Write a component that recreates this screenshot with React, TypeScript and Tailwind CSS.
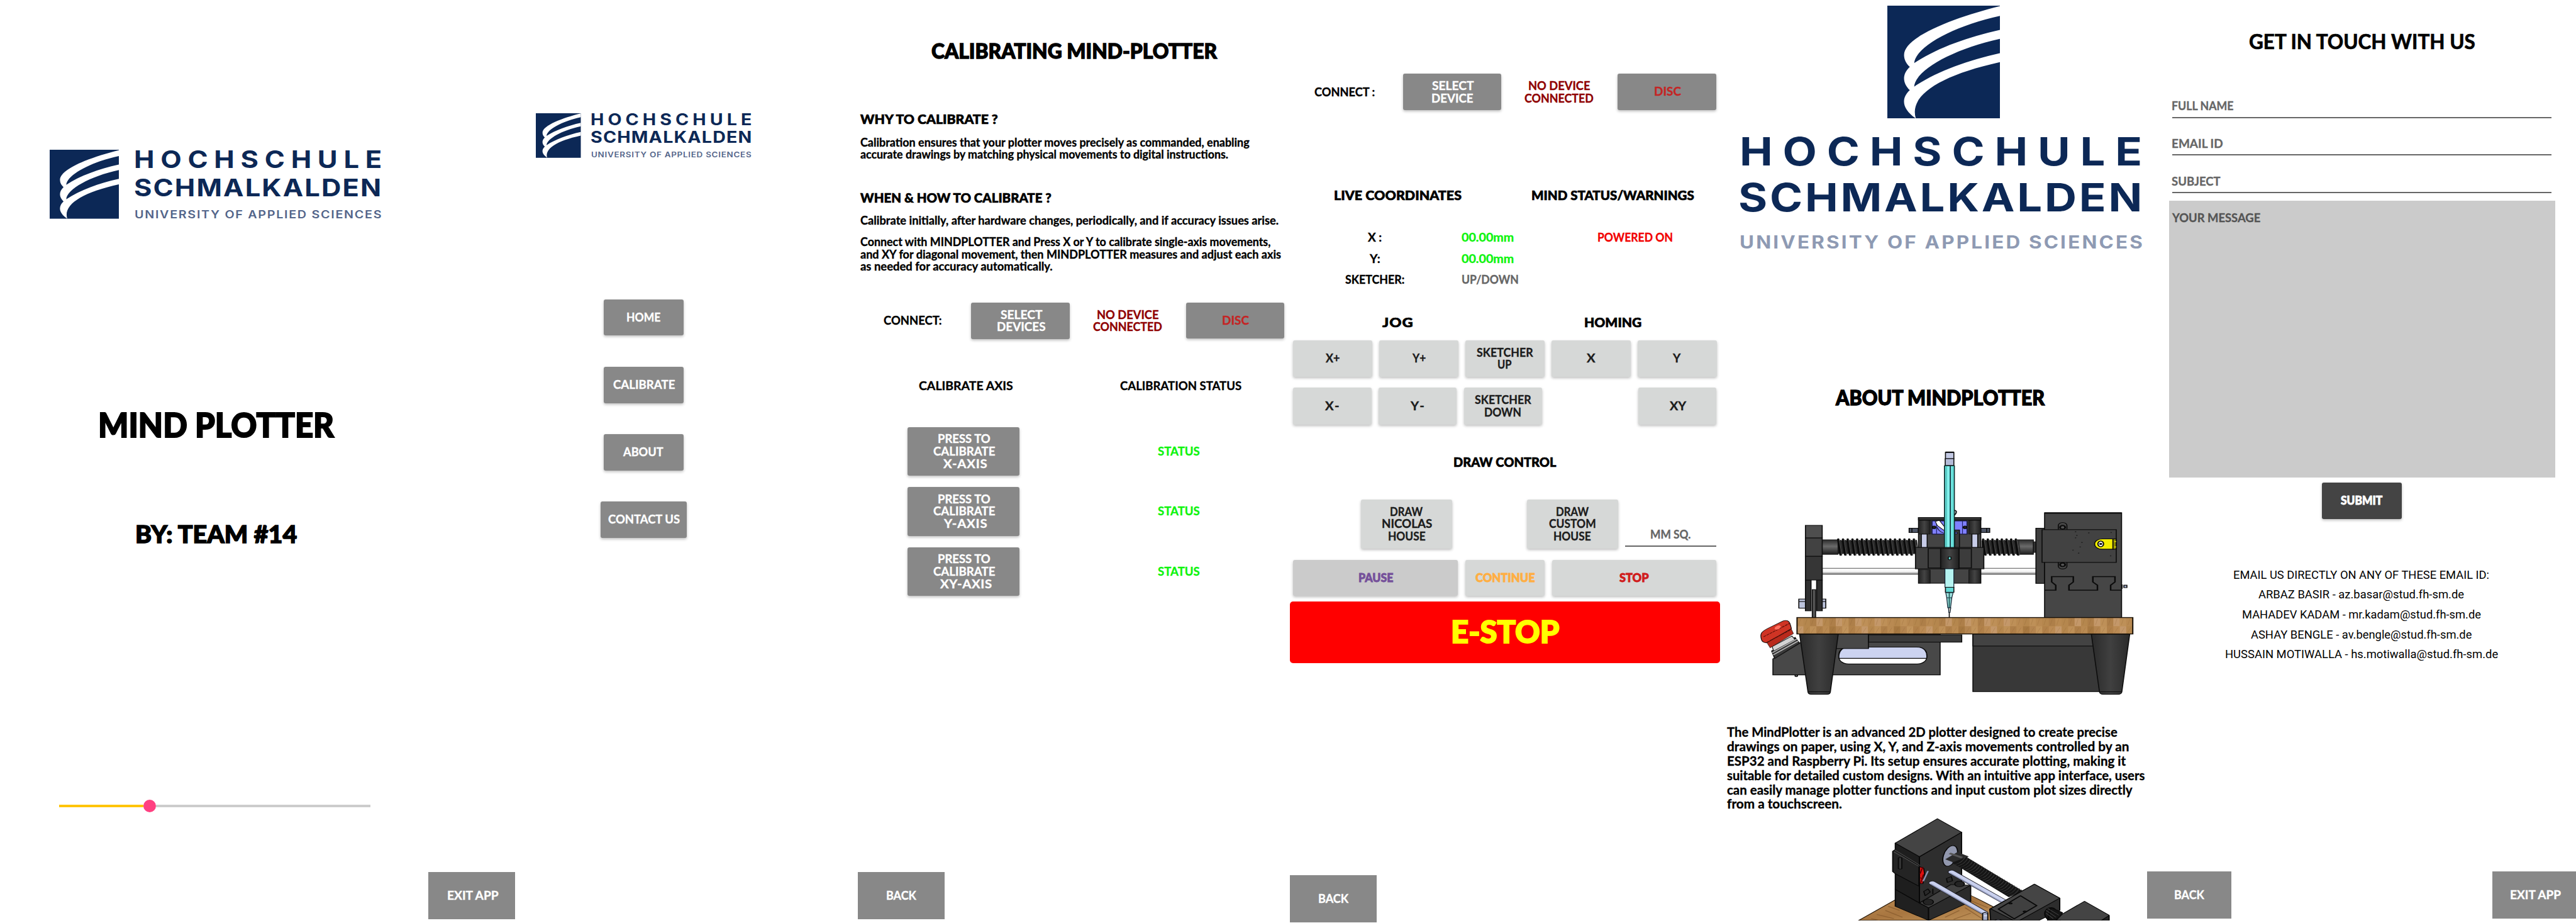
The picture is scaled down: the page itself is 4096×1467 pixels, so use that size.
import React, { useLayoutEffect, useRef, useState } from "react";

const LATO = "font-[Lato,sans-serif] font-bold";
const BODY = `${LATO} text-[18px] leading-[13px] [-webkit-text-stroke:0.35px_currentColor]`;
const HEAD = "font-[Lato,sans-serif] font-black text-[21px] leading-[15px] [-webkit-text-stroke:0.7px_currentColor]";
const TITLE = "font-[Lato,sans-serif] font-black text-[31.6px] leading-[23px] [-webkit-text-stroke:1.3px_currentColor]";
const STRONG = "font-[Lato,sans-serif] font-black text-[18px] leading-[13px] [-webkit-text-stroke:0.8px_currentColor]";

/* One line of text set to an exact measure: widened and tracked out when short, condensed when long. */
function Line({ w, className = BODY, children }: { w: number; className?: string; children: string }) {
  const ref = useRef<HTMLSpanElement>(null);
  const [fit, setFit] = useState<React.CSSProperties>({});
  useLayoutEffect(() => {
    const el = ref.current;
    if (!el) return;
    const natural = el.offsetWidth;
    const size = parseFloat(getComputedStyle(el).fontSize);
    const bearing = size * 0.06;
    const target = w + bearing * 2;
    const scale = Math.min(target / natural, 1.13);
    const gaps = Math.max(1, children.length - 1);
    const spacing = Math.max(0, (target / scale - natural) / gaps);
    setFit({ transform: `scaleX(${scale})`, letterSpacing: spacing, marginLeft: -bearing });
  }, [w, children]);
  return (
    <span className={`block shrink-0 whitespace-nowrap ${className}`} style={{ width: w }}>
      <span ref={ref} className="inline-block origin-left align-top" style={fit}>
        {children}
      </span>
    </span>
  );
}

type Row = [string, number];

function Button({ lines, className, text = BODY }: { lines: Row[]; className: string; text?: string }) {
  return (
    <button className={`flex shrink-0 flex-col items-center justify-center gap-[6.7px] ${className}`}>
      {lines.map(([t, w]) => (
        <Line key={t} w={w} className={text}>
          {t}
        </Line>
      ))}
    </button>
  );
}

const RAISED = "rounded-[3px] shadow-[0_2px_4px_rgba(0,0,0,0.26)]";
const GREY = `${RAISED} bg-[#888888] text-white`;
const LIGHT = `${RAISED} bg-[#d6d8d7] text-[#1c1c1c]`;
const FLAT = "bg-[#888888] text-white";

function Mark({ className }: { className: string }) {
  return (
    <svg viewBox="0 0 411 411" preserveAspectRatio="none" className={`block shrink-0 ${className}`}>
      <rect width="411" height="411" fill="#0c2856" />
      <path
        fill="#fff"
        d="M411 2C250 42 61 112 61 180C61 198 70 212 82 223C54 250 54 280 82 308C50 338 52 374 104 411C78 328 190 255 411 206V173C290 200 180 240 98 295C102 235 240 158 411 121V88C290 115 180 155 98 209C103 150 240 74 411 37Z"
      />
    </svg>
  );
}

function Machine() {
  const left = Array.from({ length: 17 }, (_, i) => 366 + i * 18.6);
  const right = Array.from({ length: 8 }, (_, i) => 936 + i * 18.4);
  const tones = ["#b98a52", "#b1814a", "#be9058", "#b48550", "#c4986a", "#bb8b54", "#ae7f49", "#c1945c", "#b5874e", "#a67841"];
  return (
    <svg viewBox="0 0 1568 1568" preserveAspectRatio="none" className="ml-[40px] mt-[40.2px] block h-[443.5px] w-[633.6px] shrink-0">
      <defs>
        <linearGradient id="rod" x1="0" y1="0" x2="0" y2="1">
          <stop offset="0" stopColor="#fff" />
          <stop offset=".55" stopColor="#f4f4f4" />
          <stop offset="1" stopColor="#777" />
        </linearGradient>
        <linearGradient id="shaft" x1="0" y1="0" x2="0" y2="1">
          <stop offset="0" stopColor="#2c2c2c" />
          <stop offset=".45" stopColor="#6a6a6a" />
          <stop offset="1" stopColor="#1d1d1d" />
        </linearGradient>
        <linearGradient id="post" x1="0" y1="0" x2="1" y2="0">
          <stop offset="0" stopColor="#222" />
          <stop offset=".5" stopColor="#444" />
          <stop offset="1" stopColor="#1f1f1f" />
        </linearGradient>
        <linearGradient id="leg" x1="0" y1="0" x2="1" y2="0">
          <stop offset="0" stopColor="#2a2a2a" />
          <stop offset=".5" stopColor="#404040" />
          <stop offset="1" stopColor="#2a2a2a" />
        </linearGradient>
        <linearGradient id="pen" x1="0" y1="0" x2="1" y2="0">
          <stop offset="0" stopColor="#57cfc9" />
          <stop offset=".35" stopColor="#86f3ee" />
          <stop offset="1" stopColor="#5cdad4" />
        </linearGradient>
      </defs>

      {/* guide rods and lead screw */}
      <rect x="303" y="775" width="842" height="34" fill="url(#rod)" stroke="#333" strokeWidth="3" />
      <rect x="303" y="615" width="62" height="82" fill="url(#shaft)" stroke="#111" strokeWidth="3" />
      <rect x="1068" y="615" width="66" height="82" fill="url(#shaft)" stroke="#111" strokeWidth="3" />
      <rect x="1134" y="626" width="12" height="60" fill="#333" stroke="#111" strokeWidth="3" />
      <rect x="364" y="618" width="310" height="76" fill="#1b1b1b" />
      <rect x="930" y="618" width="140" height="76" fill="#1b1b1b" />
      {[...left, ...right].map((x) => (
        <g key={x} fill="none" strokeLinecap="round">
          <path d={`M${x} 612L${x + 9} 700`} stroke="#0b0b0b" strokeWidth="9" />
          <path d={`M${x + 4} 612L${x + 14} 702`} stroke="#4b4b4b" strokeWidth="3" />
          <path d={`M${x + 10} 618L${x + 17} 692`} stroke="#2d2d2d" strokeWidth="5" />
        </g>
      ))}

      {/* left carrier */}
      <g stroke="#0d0d0d" strokeWidth="4">
        <rect x="211" y="948" width="28" height="51" fill="#bcc3dc" />
        <path d="M211 962H239" />
        <rect x="290" y="948" width="27" height="51" fill="#bcc3dc" />
        <path d="M290 962H317" />
        <rect x="237" y="842" width="22" height="172" fill="#2f2f2f" />
        <rect x="281" y="842" width="22" height="172" fill="#2f2f2f" />
        <rect x="264" y="895" width="13" height="157" fill="#555" />
        <rect x="237" y="534" width="66" height="71" fill="#4e4e4e" />
        <rect x="237" y="605" width="66" height="103" fill="#424242" />
        <rect x="237" y="708" width="66" height="133" fill="#363636" />
      </g>

      {/* carriage */}
      <g stroke="#0d0d0d" strokeWidth="4">
        <rect x="645" y="550" width="36" height="24" fill="#4d5566" />
        <path d="M656 548V576" />
        <rect x="927" y="550" width="35" height="24" fill="#4d5566" />
        <path d="M950 548V576" />
        <rect x="682" y="490" width="245" height="369" fill="#444" />
        <rect x="682" y="490" width="245" height="14" fill="#353535" />
        <rect x="735" y="509" width="138" height="74" fill="#7f80ff" stroke="#11113a" />
        <path d="M753 509V583M855 509V583" stroke="#222266" strokeWidth="3" />
        <circle cx="743" cy="545" r="7" fill="#222" />
        <circle cx="865" cy="545" r="7" fill="#222" />
        <path d="M748 512L764 506L792 556L786 566L756 535Z" fill="#fff" strokeWidth="3" />
        <path d="M755 545C760 565 775 578 790 580" fill="none" strokeWidth="3" />
        <rect x="824" y="560" width="19" height="100" fill="#3b3b3b" />
        <circle cx="830" cy="577" r="5" fill="#6667dd" strokeWidth="3" />
        <rect x="682" y="506" width="46" height="77" fill="url(#post)" strokeWidth="2" />
        <rect x="880" y="506" width="46" height="77" fill="url(#post)" strokeWidth="2" />
        <rect x="693" y="583" width="23" height="76" fill="#c7cce8" />
        <rect x="892" y="583" width="23" height="76" fill="#c7cce8" />
        <rect x="682" y="784" width="46" height="75" fill="url(#post)" strokeWidth="2" />
        <rect x="880" y="784" width="46" height="75" fill="url(#post)" strokeWidth="2" />
        <path d="M822 478C832 468 834 450 824 450" fill="none" strokeWidth="5" />
      </g>

      {/* pen body */}
      <g stroke="#0d2a2a" strokeWidth="4">
        <rect x="788" y="123" width="33" height="36" fill="#c3c9e4" stroke="#111" />
        <rect x="787" y="159" width="34" height="38" fill="#b4bbd8" stroke="#111" />
        <path d="M788 123H821" stroke="#000" strokeWidth="7" />
        <rect x="784" y="199" width="39" height="462" fill="url(#pen)" />
        <path d="M807 199V661" stroke="#123" strokeWidth="4" />
        <path d="M792 199V661" stroke="#2c9b96" strokeWidth="2" />
      </g>
      <g stroke="#0d0d0d" strokeWidth="4">
        <rect x="670" y="658" width="269" height="120" fill="#404040" />
        <rect x="720" y="664" width="49" height="109" fill="#3c3c3c" />
        <rect x="841" y="664" width="49" height="109" fill="#3c3c3c" />
        <rect x="769" y="664" width="72" height="114" fill="url(#post)" />
        <rect x="799" y="710" width="11" height="17" rx="5" fill="#63d7d2" />
      </g>
      <g stroke="#123" strokeWidth="3">
        <rect x="786" y="778" width="35" height="104" fill="#b6f4f1" />
        <rect x="788" y="882" width="33" height="28" fill="#62dad6" stroke="#111" strokeWidth="4" />
        <path d="M789 912H818L813 941H793Z" fill="#9fe2df" />
        <path d="M793 941H813L808 997H797Z" fill="#8fd7d4" />
        <path d="M803 912V997" stroke="#1c5553" strokeWidth="4" />
        <path d="M800 997H809L806 1024H801Z" fill="#c9c2b5" />
        <path d="M803 1024V1052" stroke="#111" strokeWidth="4" />
      </g>

      {/* motor tower */}
      <g stroke="#0b0b0b" strokeWidth="4">
        <rect x="1144" y="550" width="34" height="310" fill="#3e3e3e" />
        <rect x="1178" y="463" width="303" height="589" fill="#464646" />
        <path d="M1178 465H1481" strokeWidth="7" />
        <path d="M1232 558V535A17 17 0 0 1 1266 535V558M1232 742V764A17 15 0 0 0 1266 764V742" fill="#464646" />
        <rect x="1168" y="558" width="292" height="184" fill="#424242" />
        <circle cx="1249" cy="545" r="10" fill="#555" strokeWidth="7" />
        <circle cx="1249" cy="755" r="10" fill="#555" strokeWidth="7" />
        <path d="M1447 610H1405A30 29 0 0 0 1405 668H1447Z" fill="#f3ee00" />
        <rect x="1447" y="610" width="13" height="58" fill="#8f8b00" />
        <path d="M1452 625H1460M1452 655H1460" stroke="#ff0" />
        <ellipse cx="1399" cy="638" rx="11" ry="16" fill="#fff" strokeWidth="5" />
        <circle cx="1399" cy="638" r="4" fill="#777" />
        <path
          d="M1178 898H1222V870L1206 852V822H1291V852L1274 870V898H1386V870L1368 852V822H1455V852L1438 870V898H1481"
          fill="none"
          strokeWidth="6"
        />
        <path d="M1483 866V890M1490 870H1502V884H1490Z" fill="#9ba6c4" />
      </g>
      <g fill="#222">
        {[[1300, 570], [1305, 590], [1300, 604], [1352, 576], [1318, 655], [1290, 673], [1312, 690], [1440, 574], [1438, 705], [1325, 630]].map(([x, y]) => (
          <circle key={`${x}-${y}`} cx={x} cy={y} r="3" />
        ))}
      </g>

      {/* electronics below the table */}
      <g stroke="#0d0d0d" strokeWidth="4">
        <path d="M109 1284L218 1192L300 1145H767V1374H109Z" fill="#484848" />
        <rect x="369" y="1218" width="345" height="95" rx="38" fill="#fff" />
        <path d="M369 1281C366 1245 380 1218 407 1218H676C705 1218 718 1245 714 1281Z" fill="#ccd3f0" />
        <rect x="340" y="1145" width="145" height="81" fill="#484848" />
        <rect x="485" y="1149" width="367" height="41" fill="#3b3b3b" />
        <rect x="896" y="1145" width="500" height="323" fill="#383838" />
        <rect x="896" y="1145" width="480" height="67" fill="#434343" />
        <path d="M214 1145H366L335 1470Q334 1483 322 1483H260Q248 1483 247 1470Z" fill="url(#leg)" />
        <path d="M1362 1145H1513L1482 1470Q1480 1483 1468 1483H1408Q1396 1483 1394 1470Z" fill="url(#leg)" />
        <path d="M250 1469H332M1396 1469H1480" strokeWidth="3" />
        <circle cx="201" cy="1379" r="5" fill="#777" />
      </g>

      {/* emergency button */}
      <g stroke="#111" strokeWidth="4">
        <path d="M104 1240L196 1164L214 1196L116 1282Z" fill="#3a3a3a" />
        <path d="M106 1215L184 1156L196 1176L112 1240Z" fill="#d4d4d4" strokeWidth="3" />
        <path d="M110 1262L208 1184M106 1250L204 1172" stroke="#bbb" strokeWidth="5" />
        <path d="M84 1190L180 1112L190 1142L98 1222Z" fill="#b92a1c" strokeWidth="2" />
        <path d="M64 1176C56 1140 66 1130 90 1112L148 1072C164 1062 174 1072 178 1094L182 1114L84 1194C72 1192 66 1188 64 1176Z" fill="#cf3424" strokeWidth="3" />
        <path d="M72 1160L176 1084M84 1192L182 1118" fill="none" stroke="#5e0f08" strokeWidth="4" strokeDasharray="12 3" />
        <ellipse cx="128" cy="1108" rx="14" ry="9" fill="#ff7060" stroke="none" transform="rotate(-38 128 1108)" />
      </g>

      {/* table top */}
      <rect x="204" y="1052" width="1321" height="92" fill="#b88a50" />
      {Array.from({ length: 52 }, (_, i) => (
        <g key={i}>
          <rect x={204 + i * 25.4} y="1052" width="25.6" height="49.5" fill={tones[(i * 7 + (i % 4)) % 10]} />
          <rect x={204 + i * 25.4} y="1101" width="25.6" height="43" fill={tones[(i * 3 + (i % 5) + 4) % 10]} />
          <path d={`M${210 + i * 25.4} 1094L${218 + i * 25.4} 1060M${208 + i * 25.4} 1140L${222 + i * 25.4} 1108`} stroke="#8d6233" strokeWidth="2" opacity=".4" />
        </g>
      ))}
      <rect x="204" y="1052" width="1321" height="92" fill="none" stroke="#1a1208" strokeWidth="5" />
    </svg>
  );
}

function MachineCorner() {
  return (
    <svg viewBox="480 800 920 753" preserveAspectRatio="none" className="ml-[212.9px] mt-[14.8px] block h-[162.8px] w-[416.3px] shrink-0">
      <defs>
        <linearGradient id="plank" x1="0" y1="0" x2="1" y2="1">
          <stop offset="0" stopColor="#c08f55" />
          <stop offset=".5" stopColor="#a87640" />
          <stop offset="1" stopColor="#c1955c" />
        </linearGradient>
      </defs>
      <path d="M497 1553L625 1402L890 1368L985 1470L960 1553Z" fill="url(#plank)" stroke="#2a1a0a" strokeWidth="4" />
      <g stroke="#80552a" strokeWidth="5" opacity=".65">
        <path d="M560 1510L620 1540M590 1480L650 1530M600 1450L640 1480M800 1530L850 1480M830 1545L890 1500M870 1460L930 1540M880 1400L950 1460M540 1540L570 1553" />
      </g>
      <path d="M862 1210L985 1330L1010 1400L980 1455L888 1365Z" fill="#fff" />
      <g stroke="#080808" strokeWidth="4" strokeLinejoin="round">
        <path d="M625 1325L710 1425L742 1460V1553L625 1450Z" fill="#202020" />
        <path d="M742 1460L890 1290V1415L742 1553Z" fill="#2b2b2b" />
        <path d="M625 985L710 1085V1425L625 1325Z" fill="#1e1e1e" />
        <path d="M710 1085L858 905V1300L742 1460L710 1425Z" fill="#2e2e2e" />
        <path d="M773 806L858 905L710 1085L625 985Z" fill="#444" />
        <path d="M616 1045L623 1035L708 1150V1302L625 1210L616 1195Z" fill="#242424" />
        <path d="M620 1050L710 1158M623 1035L712 1150" fill="none" stroke="#555" strokeWidth="3" />
        <rect x="636" y="1090" width="12" height="86" rx="6" fill="#333" />
        <path d="M710 1425L820 1290L890 1295L742 1460Z" fill="#414141" />
        <path d="M710 1158L725 1170L728 1210L722 1282L710 1284Z" fill="#e01010" />
        <path d="M712 1210L722 1160M714 1280L724 1215M712 1240L726 1250" fill="none" stroke="#5a0000" />
        <path d="M723 1265L740 1190" stroke="#8894b4" strokeWidth="6" />
        <ellipse cx="818" cy="1079" rx="24" ry="76" fill="#9298ae" transform="rotate(8 818 1079)" />
        <path d="M725 1340L740 1322L748 1345L730 1372Z M757 1320V1360M805 1245L822 1230L826 1262L808 1275Z" fill="#292929" />
        <ellipse cx="741" cy="1418" rx="18" ry="22" fill="#242424" />
        <ellipse cx="851" cy="1286" rx="17" ry="21" fill="#242424" />
      </g>
      <path d="M822 1078L862 1110" stroke="#2b2b2b" strokeWidth="68" />
      <path d="M816 1060L860 1092" stroke="#555" strokeWidth="12" />
      <path d="M850 1108L1050 1362" stroke="#151515" strokeWidth="66" />
      {Array.from({ length: 24 }, (_, i) => (
        <path key={i} d={`M${836 + i * 8.6} ${1142 + i * 10.6}Q${860 + i * 8.6} ${1130 + i * 10.6} ${872 + i * 8.6} ${1084 + i * 10.6}`} fill="none" stroke="#3d3d3d" strokeWidth="2.5" />
      ))}
      <g strokeLinecap="round">
        <path d="M823 1198L1010 1418" stroke="#1a1a24" strokeWidth="28" />
        <path d="M823 1198L1010 1418" stroke="#c9d0ee" strokeWidth="22" />
        <path d="M755 1278L938 1498" stroke="#1a1a24" strokeWidth="28" />
        <path d="M755 1278L938 1498" stroke="#c9d0ee" strokeWidth="22" />
        <path d="M818 1205L1004 1424M750 1286L933 1505" stroke="#8e96b8" strokeWidth="5" />
      </g>
      <g stroke="#080808" strokeWidth="4" strokeLinejoin="round">
        <path d="M1114 1287L1203 1390V1480L1130 1553H960L957 1470Z" fill="#2d2d2d" />
        <path d="M1114 1287L1203 1390L1062 1553H1040L960 1468Z" fill="#454545" />
        <path d="M1065 1372L1122 1445L1043 1542L987 1470Z" fill="#404040" strokeWidth="6" />
        <circle cx="1030" cy="1428" r="5" fill="#111" />
        <circle cx="1080" cy="1488" r="5" fill="#111" />
        <ellipse cx="1172" cy="1505" rx="22" ry="46" fill="#171717" />
        <path d="M1172 1460L1212 1495L1205 1553H1160Z" fill="#141414" />
        <path d="M1155 1480L1190 1530M1160 1465L1200 1515M1155 1500L1180 1540" stroke="#484848" strokeWidth="3" />
        <path d="M1290 1413L1376 1515V1553H1190L1213 1505Z" fill="#444" />
        <path d="M1376 1518L1350 1553H1376Z" fill="#222" />
        <path d="M932 1500L940 1494L950 1502V1553H932Z" fill="#a9b1cf" />
        <path d="M936 1520H948" stroke="#fff" />
        <path d="M975 1553Q985 1538 1000 1553Z" fill="#b9c1df" />
      </g>
    </svg>
  );
}

function ConnectBar({ label, labelWidth, second, className, gap }: { label: string; labelWidth: number; second: Row; className: string; gap: string }) {
  return (
    <div className={`flex items-center ${className}`}>
      <Line w={labelWidth}>{label}</Line>
      <Button lines={[["SELECT", 64.1], second]} className={`${GREY} h-[58.3px] w-[156.5px] ${gap}`} />
      <div className="ml-[38.4px] flex w-[108px] flex-col items-center gap-[6.7px] text-[#8f0000]">
        <Line w={96.4}>NO DEVICE</Line>
        <Line w={108}>CONNECTED</Line>
      </div>
      <Button lines={[["DISC", 41]]} className={`${RAISED} ml-[38.8px] h-[57.6px] w-[156.5px] self-start bg-[#888888] text-[#c42424]`} />
    </div>
  );
}

const SCREEN = "flex h-full shrink-0 flex-col items-start";
const INTER = "font-[Inter,sans-serif]";

function Splash() {
  return (
    <section className={`${SCREEN} w-[681px]`}>
      <div className="ml-[79px] mt-[238.2px] flex gap-[25.5px] text-[#0c2856]">
        <Mark className="h-[109.6px] w-[110.4px]" />
        <div className="flex flex-col pt-[0.6px]">
          <Line w={389} className={`${INTER} text-[38.5px] leading-[28px] font-bold`}>HOCHSCHULE</Line>
          <div className="mt-[17px]">
            <Line w={389} className={`${INTER} text-[38.5px] leading-[28px] font-bold`}>SCHMALKALDEN</Line>
          </div>
          <div className="mt-[23.4px]">
            <Line w={390} className={`${INTER} text-[17.5px] leading-[12.6px] font-semibold text-[#53658a]`}>UNIVERSITY OF APPLIED SCIENCES</Line>
          </div>
        </div>
      </div>
      <div className="ml-[159.3px] mt-[307.2px]">
        <Line w={369} className="font-[Lato,sans-serif] text-[54.2px] leading-[39px] font-black [-webkit-text-stroke:2px_currentColor]">MIND PLOTTER</Line>
      </div>
      <div className="ml-[216.9px] mt-[139.6px]">
        <Line w={252.2} className="font-[Lato,sans-serif] text-[38.8px] leading-[28px] font-black [-webkit-text-stroke:1.5px_currentColor]">BY: TEAM #14</Line>
      </div>
      <div className="ml-[94.3px] mt-[409.6px] flex w-[495px] items-center">
        <div className="h-[3.4px] w-[134px] bg-[#ffc400]" />
        <div className="size-[19.4px] rounded-full bg-[#ff4081]" />
        <div className="h-[3.4px] flex-1 bg-[#cccccc]" />
      </div>
    </section>
  );
}

function Menu() {
  return (
    <section className={`${SCREEN} w-[683px]`}>
      <div className="ml-[171.3px] mt-[180px] flex gap-[16.6px] text-[#0c2856]">
        <Mark className="h-[70.8px] w-[71.5px]" />
        <div className="flex flex-col pt-[0.5px]">
          <Line w={253} className={`${INTER} text-[25.3px] leading-[18.4px] font-bold`}>HOCHSCHULE</Line>
          <div className="mt-[10.2px]">
            <Line w={253} className={`${INTER} text-[25.3px] leading-[18.4px] font-bold`}>SCHMALKALDEN</Line>
          </div>
          <div className="mt-[14.5px]">
            <Line w={253.5} className={`${INTER} text-[11.9px] leading-[8.7px] font-semibold text-[#53658a]`}>UNIVERSITY OF APPLIED SCIENCES</Line>
          </div>
        </div>
      </div>
      <nav className="mt-[225px] flex w-full flex-col items-center gap-[49.4px] pl-[1.6px]">
        <Button lines={[["HOME", 52.3]]} className={`${GREY} h-[57.7px] w-[126.6px]`} />
        <Button lines={[["CALIBRATE", 96.4]]} className={`${GREY} h-[57.7px] w-[126.6px]`} />
        <Button lines={[["ABOUT", 61.5]]} className={`${GREY} h-[57.7px] w-[126.6px]`} />
        <Button lines={[["CONTACT US", 111.5]]} className={`${GREY} h-[57.7px] w-[137px]`} />
      </nav>
      <Button lines={[["EXIT APP", 80]]} className={`${FLAT} mt-auto mb-[6px] h-[75.5px] w-[138px]`} />
    </section>
  );
}

function Calibrate() {
  const axes: Row[] = [["X-AXIS", 67.3], ["Y-AXIS", 66.4], ["XY-AXIS", 79.8]];
  return (
    <section className={`${SCREEN} w-[687px]`}>
      <div className="ml-[118.7px] mt-[70px]">
        <Line w={450} className={TITLE}>CALIBRATING MIND-PLOTTER</Line>
      </div>
      <div className="ml-[5px] mt-[88px]">
        <Line w={216} className={HEAD}>WHY TO CALIBRATE ?</Line>
        <div className="mt-[23.8px] flex flex-col gap-[6.7px]">
          <Line w={617}>Calibration ensures that your plotter moves precisely as commanded, enabling</Line>
          <Line w={582.6}>accurate drawings by matching physical movements to digital instructions.</Line>
        </div>
        <div className="mt-[53.8px]">
          <Line w={301.4} className={HEAD}>WHEN &amp; HOW TO CALIBRATE ?</Line>
        </div>
        <div className="mt-[23px]">
          <Line w={663.3}>Calibrate initially, after hardware changes, periodically, and if accuracy issues arise.</Line>
        </div>
        <div className="mt-[20.6px] flex flex-col gap-[6.7px]">
          <Line w={650}>Connect with MINDPLOTTER and Press X or Y to calibrate single-axis movements,</Line>
          <Line w={666.5}>and XY for diagonal movement, then MINDPLOTTER measures and adjust each axis</Line>
          <Line w={304}>as needed for accuracy automatically.</Line>
        </div>
      </div>
      <ConnectBar label="CONNECT:" labelWidth={90} second={["DEVICES", 75.3]} className="ml-[42.5px] mt-[50.6px]" gap="ml-[47.7px]" />
      <div className="ml-[98.5px] mt-[68px] flex gap-[172.8px]">
        <Line w={147}>CALIBRATE AXIS</Line>
        <Line w={190.6}>CALIBRATION STATUS</Line>
      </div>
      <div className="ml-[79.2px] mt-[58.5px] flex flex-col gap-[18.1px]">
        {axes.map((axis) => (
          <div key={axis[0]} className="flex items-center gap-[221.1px]">
            <Button lines={[["PRESS TO", 82], ["CALIBRATE", 96.4], axis]} className={`${GREY} h-[77.5px] w-[178px]`} />
            <div className="text-[#0cf40c]">
              <Line w={65}>STATUS</Line>
            </div>
          </div>
        ))}
      </div>
      <Button lines={[["BACK", 45.7]]} className={`${FLAT} mt-auto mb-[6.3px] h-[75.2px] w-[138px]`} />
    </section>
  );
}

function Control() {
  const jog: Row[][] = [[["X+", 20.8]], [["Y+", 19]], [["SKETCHER", 87.8], ["UP", 20.8]], [["X", 12]], [["Y", 10.5]]];
  const jogDown: Row[][] = [[["X-", 20]], [["Y-", 19.5]], [["SKETCHER", 87.8], ["DOWN", 57]]];
  return (
    <section className={`${SCREEN} w-[684px]`}>
      <ConnectBar label="CONNECT :" labelWidth={94} second={["DEVICE", 64.3]} className="ml-[40.2px] mt-[117.1px]" gap="ml-[45.4px]" />
      <div className="ml-[71.5px] mt-[127px] flex gap-[114px]">
        <Line w={200} className={HEAD}>LIVE COORDINATES</Line>
        <Line w={256.6} className={HEAD}>MIND STATUS/WARNINGS</Line>
      </div>
      <div className="mt-[54px] grid grid-cols-[274.2px_216.3px_1fr] gap-y-[20.5px]">
        <div className="flex justify-center pr-[3.2px]"><Line w={20}>X :</Line></div>
        <div className="text-[#0cf40c]"><Line w={81}>00.00mm</Line></div>
        <div className="text-[#f20000]"><Line w={117.7}>POWERED ON</Line></div>
        <div className="flex justify-center pr-[3.2px]"><Line w={15}>Y:</Line></div>
        <div className="col-span-2 text-[#0cf40c]"><Line w={81}>00.00mm</Line></div>
        <div className="flex justify-center pr-[3.2px]"><Line w={92}>SKETCHER:</Line></div>
        <div className="col-span-2 text-[#666666]"><Line w={88.7}>UP/DOWN</Line></div>
      </div>
      <div className="ml-[148.4px] mt-[53px] flex gap-[275.6px]">
        <Line w={45.7} className={HEAD}>JOG</Line>
        <Line w={88.7} className={HEAD}>HOMING</Line>
      </div>
      <div className="ml-[5.4px] mt-[21.2px] flex gap-[11.3px]">
        {jog.map((lines, i) => (
          <Button key={i} lines={lines} className={`${LIGHT} h-[58.6px] w-[125.6px]`} />
        ))}
      </div>
      <div className="ml-[5.4px] mt-[17.3px] flex w-[673px] gap-[11.6px]">
        {jogDown.map((lines, i) => (
          <Button key={i} lines={lines} className={`${LIGHT} h-[58.6px] w-[124.2px]`} />
        ))}
        <Button lines={[["XY", 24.4]]} className={`${LIGHT} ml-auto h-[58.6px] w-[124.2px]`} />
      </div>
      <div className="ml-[261.5px] mt-[50.5px]">
        <Line w={160.7} className={HEAD}>DRAW CONTROL</Line>
      </div>
      <div className="ml-[113.1px] mt-[53.5px] flex">
        <Button lines={[["DRAW", 50], ["NICOLAS", 78], ["HOUSE", 57.5]]} className={`${LIGHT} h-[77.7px] w-[144.8px]`} />
        <Button lines={[["DRAW", 50], ["CUSTOM", 72.4], ["HOUSE", 57.5]]} className={`${LIGHT} ml-[119px] h-[77.7px] w-[144.8px]`} />
        <div className="mb-[3px] ml-[11.7px] flex w-[144.8px] items-end justify-center border-b-2 border-[#666666] pb-[10.6px] text-[#666666]">
          <Line w={62.5}>MM SQ.</Line>
        </div>
      </div>
      <div className="ml-[5.4px] mt-[17.9px] flex gap-[11.3px]">
        <Button lines={[["PAUSE", 53]]} className={`${RAISED} h-[57.8px] w-[262px] bg-[#cbcbcb] text-[#75509a]`} text={STRONG} />
        <Button lines={[["CONTINUE", 92.3]]} className={`${RAISED} h-[57.8px] w-[126.8px] bg-[#d6d8d7] text-[#ffae42]`} text={STRONG} />
        <Button lines={[["STOP", 44.3]]} className={`${RAISED} h-[57.8px] w-[261.6px] bg-[#d6d8d7] text-[#d01c1c]`} text={STRONG} />
      </div>
      <Button
        lines={[["E-STOP", 167]]}
        className="mt-[8.6px] h-[98.2px] w-[684px] rounded-[5px] bg-[#ff0000] pb-[3px] text-[#ffff00]"
        text="font-[Lato,sans-serif] font-black text-[48.5px] leading-[35px] [-webkit-text-stroke:2px_currentColor]"
      />
      <Button lines={[["BACK", 46]]} className={`${FLAT} mt-auto mb-[0.8px] h-[75.7px] w-[138px]`} />
    </section>
  );
}

function About() {
  const copy: Row[] = [
    ["The MindPlotter is an advanced 2D plotter designed to create precise", 618.2],
    ["drawings on paper, using X, Y, and Z-axis movements controlled by an", 636.7],
    ["ESP32 and Raspberry Pi. Its setup ensures accurate plotting, making it", 631.3],
    ["suitable for detailed custom designs. With an intuitive app interface, users", 662],
    ["can easily manage plotter functions and input custom plot sizes directly", 642.6],
    ["from a touchscreen.", 180.6],
  ];
  return (
    <section className={`${SCREEN} w-[679px] text-black`}>
      <Mark className="ml-[266px] mt-[9.2px] h-[179.3px] w-[179px]" />
      <div className="ml-[35px] mt-[29.7px] text-[#0c2856]">
        <Line w={633} className={`${INTER} text-[62.5px] leading-[45.4px] font-bold`}>HOCHSCHULE</Line>
      </div>
      <div className="ml-[33px] mt-[27.2px] text-[#0c2856]">
        <Line w={635} className={`${INTER} text-[62.5px] leading-[45.4px] font-bold`}>SCHMALKALDEN</Line>
      </div>
      <div className="ml-[32.5px] mt-[39px] text-[#8e9ab3]">
        <Line w={637} className={`${INTER} text-[27.8px] leading-[20.2px] font-bold`}>UNIVERSITY OF APPLIED SCIENCES</Line>
      </div>
      <div className="ml-[186.2px] mt-[225.6px]">
        <Line w={328} className={TITLE}>ABOUT MINDPLOTTER</Line>
      </div>
      <Machine />
      <div className="ml-[12px] mt-[28.6px] flex flex-col gap-[7.83px]">
        {copy.map(([t, w]) => (
          <Line key={t} w={w} className={`${LATO} text-[20.5px] leading-[15px] [-webkit-text-stroke:0.35px_currentColor]`}>{t}</Line>
        ))}
      </div>
      <MachineCorner />
    </section>
  );
}

function Contact() {
  const fields: Row[] = [["FULL NAME", 96.5], ["EMAIL ID", 79], ["SUBJECT", 76]];
  const mails: Row[] = [
    ["EMAIL US DIRECTLY ON ANY OF THESE EMAIL ID:", 405],
    ["ARBAZ BASIR - az.basar@stud.fh-sm.de", 325],
    ["MAHADEV KADAM - mr.kadam@stud.fh-sm.de", 378],
    ["ASHAY BENGLE - av.bengle@stud.fh-sm.de", 349],
    ["HUSSAIN MOTIWALLA - hs.motiwalla@stud.fh-sm.de", 432.3],
  ];
  return (
    <section className={`${SCREEN} w-[682px]`}>
      <div className="ml-[164.3px] mt-[55px]">
        <Line w={355.5} className="font-[Lato,sans-serif] text-[31.6px] leading-[23px] font-bold [-webkit-text-stroke:0.7px_currentColor]">GET IN TOUCH WITH US</Line>
      </div>
      <div className="ml-[40.3px] mt-[84.4px] flex flex-col gap-[34.5px] text-[#666666]">
        {fields.map(([t, w]) => (
          <div key={t} className="w-[603.2px] border-b-2 border-[#666666] pb-[10.2px]">
            <Line w={w}>{t}</Line>
          </div>
        ))}
      </div>
      <div className="ml-[34.5px] mt-[12.5px] h-[439.1px] w-[614.6px] bg-[#cbcbcb] pl-[6.5px] pt-[21px] text-[#555555]">
        <Line w={138}>YOUR MESSAGE</Line>
      </div>
      <Button
        lines={[["SUBMIT", 64.4]]}
        className={`${RAISED} ml-[278.3px] mt-[8.4px] h-[57.8px] w-[126.7px] bg-[#444444] text-white`}
        text={STRONG}
      />
      <div className="mt-[82.9px] flex w-full flex-col items-center gap-[18.5px]">
        {mails.map(([t, w]) => (
          <Line key={t} w={w} className="font-[Roboto,sans-serif] text-[18.5px] leading-[13.2px]">{t}</Line>
        ))}
      </div>
      <div className="mt-auto mb-[6.7px] flex w-full justify-between">
        <Button lines={[["BACK", 45.6]]} className={`${FLAT} h-[75.2px] w-[134px]`} />
        <Button lines={[["EXIT APP", 79.4]]} className={`${FLAT} h-[75.2px] w-[132.8px]`} />
      </div>
    </section>
  );
}

export default function App() {
  return (
    <main className="flex h-[1467px] w-[4096px] overflow-hidden bg-white text-black">
      <Splash />
      <Menu />
      <Calibrate />
      <Control />
      <About />
      <Contact />
    </main>
  );
}
